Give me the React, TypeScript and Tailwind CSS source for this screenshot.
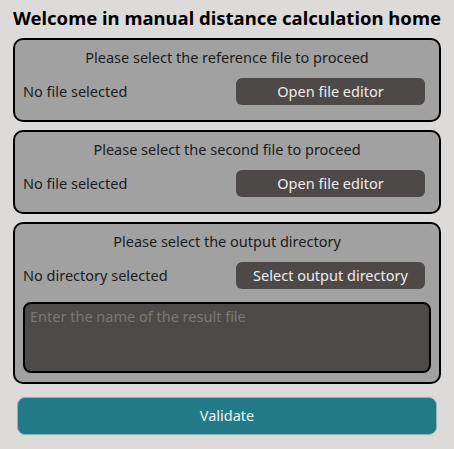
const font = { fontFamily: '"Noto Sans", "Open Sans", sans-serif' };

function FileCard({ title, status, action }: { title: string; status: string; action: string }) {
  return (
    <div className="h-[84px] rounded-[10px] border-2 border-black bg-[#a1a1a1] px-2 pt-2">
      <div className="h-[18px] text-center text-[14.5px] leading-[18px] text-[#1c1c1c]">{title}</div>
      <div className="mt-3 flex items-center justify-between">
        <span className="text-[14.5px] text-[#1c1c1c]">{status}</span>
        <button className="mr-[6px] h-[27px] w-[189px] rounded-[6px] bg-[#4e4949] text-[14.5px] text-[#ececec]">
          {action}
        </button>
      </div>
    </div>
  );
}

export default function App() {
  return (
    <div className="h-[449px] w-[454px] bg-[#dddbd9] px-[13px]" style={font}>
      <h1 className="flex h-[38px] items-center justify-center whitespace-nowrap pb-[2px] text-[18.5px] font-bold text-black">
        Welcome in manual distance calculation home
      </h1>

      <div className="flex flex-col gap-2">
        <FileCard title="Please select the reference file to proceed" status="No file selected" action="Open file editor" />
        <FileCard title="Please select the second file to proceed" status="No file selected" action="Open file editor" />

        {/* Output directory */}
        <div className="h-[162px] rounded-[10px] border-2 border-black bg-[#a1a1a1] px-2 pt-2">
          <div className="h-[18px] text-center text-[14.5px] leading-[18px] text-[#1c1c1c]">
            Please select the output directory
          </div>
          <div className="mt-3 flex items-center justify-between">
            <span className="text-[14.5px] text-[#1c1c1c]">No directory selected</span>
            <button className="mr-[6px] h-[27px] w-[189px] rounded-[6px] bg-[#4e4949] text-[14.5px] text-[#ececec]">
              Select output directory
            </button>
          </div>
          <textarea
            placeholder="Enter the name of the result file"
            className="mt-[13px] block h-[71px] w-full resize-none rounded-[8px] border-2 border-black bg-[#4d4b49] px-[5px] py-[2px] text-[14.5px] text-white outline-none placeholder:text-[#7a7876]"
          />
        </div>
      </div>

      <button className="mx-[4px] mt-[13px] h-[38px] w-[420px] rounded-[8px] border border-[#8fb2b8] bg-[#237a87] text-[14.5px] text-[#eef4f5]">
        Validate
      </button>
    </div>
  );
}
